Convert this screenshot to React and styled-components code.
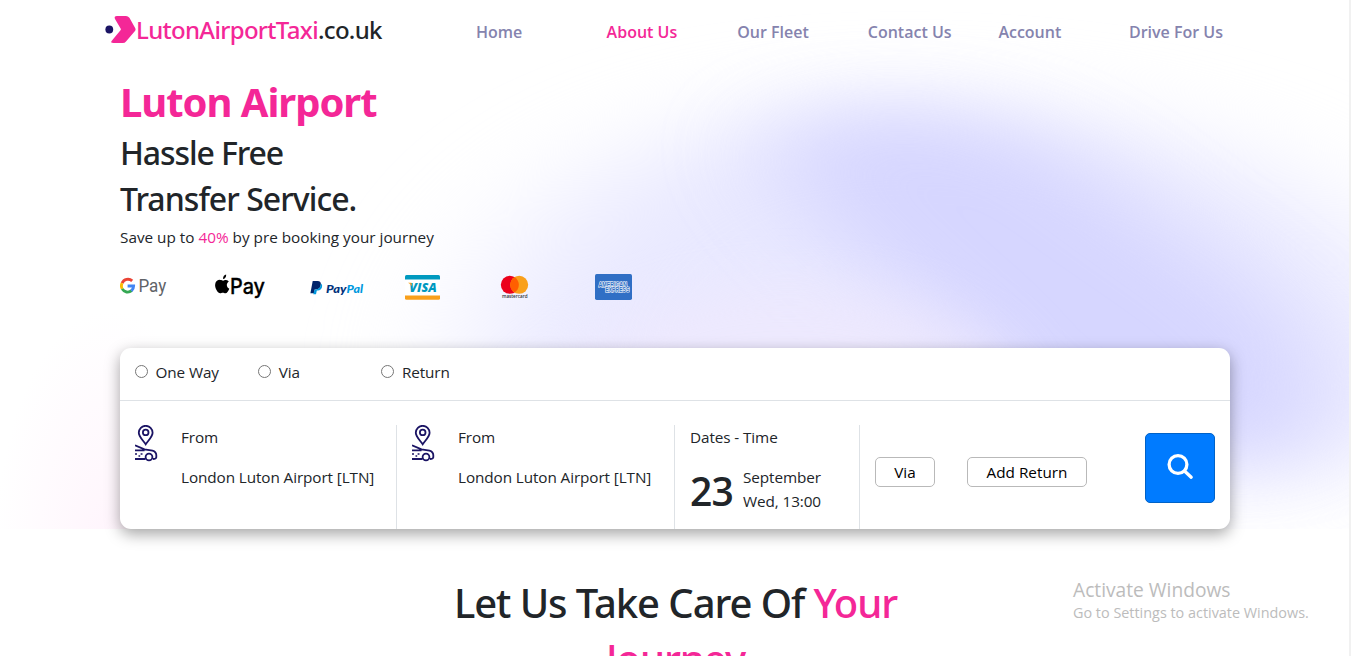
import React from 'react';
import styled, { createGlobalStyle } from 'styled-components';

const GlobalStyle = createGlobalStyle`
  * { box-sizing: border-box; }
  html, body { margin: 0; overflow: hidden; }
  body {
    background: #fff;
    color: #212529;
    font: 400 15.3px/24px "Open Sans", "Noto Sans", sans-serif;
  }
  h1, h2, p { margin: 0; }
`;

const Page = styled.div`
  position: relative;
  height: 656px;
  overflow: hidden;
  border-right: 2px solid #f1f1f1;
`;

const Hero = styled.section`
  position: relative;
  height: 529px;
`;

const Backdrop = styled.svg`
  position: absolute;
  inset: 0;
  width: 1349px;
  height: 529px;
  display: block;
`;

const Container = styled.div`
  position: relative;
  width: 1110px;
  margin-left: 120px;
`;

const Header = styled.header`
  display: flex;
  height: 64px;
`;

const Brand = styled.a`
  display: flex;
  align-items: center;
  flex: none;
  width: 371px;
  height: 60px;
  margin-left: -15px;
  font: 500 24px/36px "Noto Sans", sans-serif;
  letter-spacing: -0.68px;
  white-space: nowrap;
  svg { flex: none; }
`;

const Accent = styled.span`
  color: #f42797;
`;

const Nav = styled.nav`
  display: grid;
  grid-template-columns: repeat(6, 130.6px);
  align-items: center;
  flex: none;
`;

const NavLink = styled.a`
  font-size: 16px;
  font-weight: 600;
  white-space: nowrap;
  color: ${(p) => (p.$active ? '#f42797' : '#8583ae')};
`;

const Intro = styled.div`
  height: 195px;
  padding-top: 14px;
`;

const Title = styled.h1`
  font: 700 40px/48px "Noto Sans", sans-serif;
  letter-spacing: -1.05px;
  color: #f42797;
`;

const Subtitle = styled.h2`
  margin-top: 8px;
  font: 500 32px/38.4px "Noto Sans", sans-serif;
  letter-spacing: ${(p) => p.$tracking}px;
`;

const Saving = styled.p`
  margin-top: 6px;
  white-space: nowrap;
`;

const Payments = styled.div`
  display: grid;
  grid-template-columns: repeat(6, 95px);
  align-items: center;
  height: 56px;
  svg { display: block; }
`;

const BookingCard = styled.div`
  height: 181px;
  margin-top: 33px;
  border-radius: 11px;
  background: #fff;
  box-shadow: rgba(0, 0, 0, 0.36) 0 5px 15px;
`;

const TripTypes = styled.div`
  display: grid;
  grid-template-columns: repeat(3, 123.2px);
  height: 53px;
  padding: 12px 15px 0;
  border-bottom: 1px solid #dee2e6;
`;

const TripLabel = styled.label`
  display: flex;
  align-items: flex-start;
  gap: 7.5px;
  height: 24px;
  letter-spacing: -0.1px;
`;

const Radio = styled.input`
  width: 13px;
  height: 13px;
  margin: 5px 0 0;
`;

const Fields = styled.div`
  display: flex;
  height: 128px;
  padding-top: 24px;
  letter-spacing: -0.1px;
`;

const Field = styled.div`
  display: flex;
  flex: none;
  width: ${(p) => p.$width}px;
  padding-left: 15px;
  border-right: 1px solid #dee2e6;
`;

const RouteIcon = styled.svg`
  width: 24px;
  height: 38px;
  margin-right: 22px;
  flex: none;
`;

const FieldText = styled.div`
  white-space: nowrap;
`;

const FieldValue = styled.p`
  margin-top: 16px;
`;

const DateRow = styled.div`
  display: flex;
  margin-top: 16px;
`;

const Day = styled.div`
  width: 53px;
  padding-top: 2px;
  font-size: 39px;
  font-weight: 600;
  line-height: 48px;
  letter-spacing: -0.8px;
`;

const Actions = styled.div`
  display: flex;
  flex: 1;
  padding: 8px 15px 0;
`;

const OutlineButton = styled.button`
  width: ${(p) => p.$width}px;
  height: 30px;
  margin: 24px 32px 0 0;
  padding: 0 0 1px;
  border: 1px solid #b9b9b9;
  border-radius: 5px;
  background: #fff;
  color: #000;
  font: inherit;
`;

const SearchButton = styled.button`
  width: 70px;
  height: 70px;
  margin-left: auto;
  padding: 0;
  border: 1px solid #0062c8;
  border-radius: 5px;
  background: #007bff;
  svg { display: block; margin: -3px auto 0; }
`;

const Care = styled.h1`
  width: 555px;
  margin: 46px 0 0 398px;
  text-align: center;
  font: 500 40px/56px "Noto Sans", sans-serif;
  letter-spacing: -1.07px;
`;

const Watermark = styled.div`
  position: absolute;
  left: 1073px;
  top: 578px;
  color: #bcbcbc;
  font-size: 14.4px;
  line-height: 22px;
  white-space: nowrap;
`;

const WatermarkTitle = styled.div`
  font-size: 19.2px;
  line-height: 24px;
`;

const HeroBackdrop = () => (
  <Backdrop viewBox="0 0 1349 529">
    <defs>
      <filter id="wide" x="-50%" y="-50%" width="200%" height="200%" colorInterpolationFilters="sRGB"><feGaussianBlur stdDeviation="75 40" /></filter>
      <filter id="mid" x="-50%" y="-50%" width="200%" height="200%" colorInterpolationFilters="sRGB"><feGaussianBlur stdDeviation="56 36" /></filter>
      <filter id="near" x="-50%" y="-50%" width="200%" height="200%" colorInterpolationFilters="sRGB"><feGaussianBlur stdDeviation="30 26" /></filter>
      <radialGradient id="rose"><stop stopColor="#fff0fb" /><stop offset="1" stopColor="#fff0fb" stopOpacity="0" /></radialGradient>
    </defs>
    <ellipse cx="110" cy="550" rx="115" ry="240" fill="url(#rose)" opacity=".7" />
    <path d="M495 300C560 150 740 100 920 105C1150 110 1300 170 1390 270C1440 370 1420 440 1350 475H600C480 460 460 380 495 300Z" fill="#e9e9ff" filter="url(#wide)" />
    <path d="M770 130C870 85 1020 110 1100 180C1170 240 1280 290 1320 370C1330 450 1290 480 1230 460L1010 410C970 320 790 240 770 130Z" fill="#c9c9ff" opacity=".6" filter="url(#mid)" />
    <path d="M480 450Q600 280 800 285Q940 290 1010 360V450Z" fill="#f0e9fd" opacity=".6" filter="url(#near)" />
  </Backdrop>
);

const LogoMark = () => (
  <svg width="31" height="30" viewBox="0 0 31 30">
    <circle cx="4.3" cy="14.5" r="3.9" fill="#1b1464" />
    <path d="M12 1H21Q23 1 24.4 2.7L30.3 13.3Q31 14.5 30.2 15.7L21 26.4Q19.8 28 17.8 28H8.5Q4.8 28 7 25.5L15.5 15.3Q16.2 14.4 15.6 13.4L10 4Q8.7 1 12 1Z" fill="#f42797" />
  </svg>
);

const PickupIcon = () => (
  <RouteIcon viewBox="0 0 24 38" fill="none" stroke="#1b1464" strokeWidth="1.8">
    <path d="M10.7 19.3C8 15.2 3.8 11.6 3.8 7.7A6.9 6.9 0 0 1 17.6 7.7C17.6 11.6 13.4 15.2 10.7 19.3Z" />
    <circle cx="10.7" cy="7.4" r="2.8" />
    <path d="M0 20.3L9.5 24.3L17.5 25.6Q21.2 26.8 21.3 30V32.3Q21 34 18 34M0 25.3H9.5M0 34H10.5" />
    <circle cx="14" cy="32" r="3.4" />
    <path d="M0 29H2M3.5 31H5.2M5.6 29H7.5" strokeWidth="1.4" />
  </RouteIcon>
);

const GooglePay = () => (
  <svg width="50" height="28" viewBox="0 0 50 28">
    <g fill="none" strokeWidth="2.9">
      <path d="M12.2 7.9A6.3 6.3 0 0 0 2.1 10.1" stroke="#ea4335" />
      <path d="M2.1 10.1A6.3 6.3 0 0 0 2.2 15.9" stroke="#fbbc04" />
      <path d="M2.2 15.9A6.3 6.3 0 0 0 11.6 17.7" stroke="#34a853" />
      <path d="M11.4 17.9Q13.6 16 13.6 13H7.6" stroke="#4285f4" />
    </g>
    <text x="18.4" y="19.2" fontFamily="Roboto" fontSize="18.5" fill="#5f6368" textLength="27.8" lengthAdjust="spacingAndGlyphs">Pay</text>
  </svg>
);

const ApplePay = () => (
  <svg width="52" height="30" viewBox="0 0 52 30">
    <path d="M10 6.3C9.7 4 11.2 2.2 13 1.8C13.3 4 11.9 6 10 6.3ZM7.3 7.2C8.6 7.2 9 7.9 10 7.9C11 7.9 11.7 7 13 7.2C14.2 7.3 15.1 7.9 15.7 8.7C12.8 10.7 13.2 14.6 16.2 15.9C15.5 18 13.9 20.5 12.3 20.5C11.3 20.5 10.8 19.9 9.7 19.9C8.6 19.9 8 20.5 7.1 20.5C4.8 20.5 1.8 15.7 2 12.1C2.1 9.1 4.1 7.2 6.1 7Z" transform="translate(-1.9 .8)" fill="#000" />
    <text x="15" y="21.8" fontFamily="Inter, Roboto" fontSize="21" fontWeight="500" fill="#000" stroke="#000" strokeWidth=".3" textLength="35" lengthAdjust="spacingAndGlyphs">Pay</text>
  </svg>
);

const PayPal = () => (
  <svg width="55" height="22" viewBox="0 0 55 22">
    <path d="M2.7 5H7.5Q11.4 5.3 10.8 8.9Q10.2 13 6.2 13.4H4.7L4 17.2H.4Z" fill="#00246b" />
    <path d="M11 7.6Q12.7 8.8 12 11.3Q11.1 14.4 8 14.4H6.8L6 18.3H3.2L4.7 13.4H6.2Q10.5 13 11 7.6Z" fill="#0099de" />
    <g fontFamily="Lato" fontStyle="italic" fontWeight="900" fontSize="11">
      <text x="16" y="16.5" fill="#00327c" textLength="20.5" lengthAdjust="spacingAndGlyphs">Pay</text>
      <text x="36.5" y="16.5" fill="#0099de" textLength="16.5" lengthAdjust="spacingAndGlyphs">Pal</text>
    </g>
  </svg>
);

const Visa = () => (
  <svg width="35" height="26" viewBox="0 0 35 26">
    <rect y=".8" width="35" height="25" rx="1.5" fill="#fff" />
    <path d="M1.5 1H33.5Q35 1 35 2.5V5.4H0V2.5Q0 1 1.5 1Z" fill="#0099bf" />
    <path d="M0 21.4H35V24.3Q35 25.8 33.5 25.8H1.5Q0 25.8 0 24.3Z" fill="#f9a01b" />
    <text x="4.3" y="18" fontFamily="Open Sans" fontStyle="italic" fontWeight="800" fontSize="12.8" fill="#0099bf" textLength="27.5" lengthAdjust="spacingAndGlyphs">VISA</text>
    <path d="M3 8.8H6.3L7.4 12.4Q5.8 9.8 3 8.8Z" fill="#f9a01b" />
  </svg>
);

const Mastercard = () => (
  <svg width="30" height="26" viewBox="0 0 30 26">
    <circle cx="9.8" cy="10.8" r="9" fill="#eb001b" />
    <circle cx="19.2" cy="10.8" r="9" fill="#f9a01b" />
    <path d="M14.5 3.1A9 9 0 0 1 14.5 18.5A9 9 0 0 1 14.5 3.1Z" fill="#ff5f00" />
    <text x="2" y="24.2" fontFamily="Open Sans" fontWeight="600" fontSize="5" fill="#333" textLength="25.5" lengthAdjust="spacingAndGlyphs">mastercard</text>
  </svg>
);

const Amex = () => (
  <svg width="37" height="26" viewBox="0 0 37 26">
    <rect width="37" height="26" rx="1.7" fill="#306fc5" />
    <path d="M5 7.3H31.5L33 12.5H35V18.5H10V13.3H3Z" fill="#fff" opacity=".35" />
    <g fontFamily="Liberation Sans" fontWeight="700" fontSize="6.5" fill="#306fc5" stroke="#fff" strokeWidth=".9" paintOrder="stroke">
      <text x="3.5" y="12.5" textLength="28.5" lengthAdjust="spacingAndGlyphs">AMERICAN</text>
      <text x="10.3" y="18.3" textLength="24" lengthAdjust="spacingAndGlyphs">EXPRESS</text>
    </g>
  </svg>
);

const links = ['Home', 'About Us', 'Our Fleet', 'Contact Us', 'Account', 'Drive For Us'];
const trips = ['One Way', 'Via', 'Return'];

const LocationField = ({ width }) => (
  <Field $width={width}>
    <PickupIcon />
    <FieldText>
      <p>From</p>
      <FieldValue>London Luton Airport [LTN]</FieldValue>
    </FieldText>
  </Field>
);

export default function App() {
  return (
    <Page>
      <GlobalStyle />
      <Hero>
        <HeroBackdrop />
        <Container>
          <Header>
            <Brand><LogoMark /><Accent>LutonAirportTaxi</Accent>.co.uk</Brand>
            <Nav>
              {links.map((link) => <NavLink key={link} $active={link === 'About Us'}>{link}</NavLink>)}
            </Nav>
          </Header>
          <Intro>
            <Title>Luton Airport</Title>
            <Subtitle $tracking={-1.1}>Hassle Free</Subtitle>
            <Subtitle $tracking={-0.96}>Transfer Service.</Subtitle>
            <Saving>Save up to <Accent>40%</Accent> by pre booking your journey</Saving>
          </Intro>
          <Payments>
            <GooglePay /><ApplePay /><PayPal /><Visa /><Mastercard /><Amex />
          </Payments>
          <BookingCard>
            <TripTypes>
              {trips.map((trip) => (
                <TripLabel key={trip}><Radio type="radio" name="trip" />{trip}</TripLabel>
              ))}
            </TripTypes>
            <Fields>
              <LocationField width={277} />
              <LocationField width={278} />
              <Field $width={185}>
                <FieldText>
                  <p>Dates - Time</p>
                  <DateRow>
                    <Day>23</Day>
                    <div><p>September</p><p>Wed, 13:00</p></div>
                  </DateRow>
                </FieldText>
              </Field>
              <Actions>
                <OutlineButton $width={60}>Via</OutlineButton>
                <OutlineButton $width={120}>Add Return</OutlineButton>
                <SearchButton aria-label="Search">
                  <svg width="28" height="28" viewBox="0 0 28 28" fill="none" stroke="#fff" strokeWidth="3.3" strokeLinecap="round">
                    <circle cx="12" cy="11.5" r="8.9" /><path d="M18.5 18L25.2 24.2" />
                  </svg>
                </SearchButton>
              </Actions>
            </Fields>
          </BookingCard>
        </Container>
      </Hero>
      <Care>Let Us Take Care Of <Accent>Your Journey</Accent></Care>
      <Watermark>
        <WatermarkTitle>Activate Windows</WatermarkTitle>
        Go to Settings to activate Windows.
      </Watermark>
    </Page>
  );
}
